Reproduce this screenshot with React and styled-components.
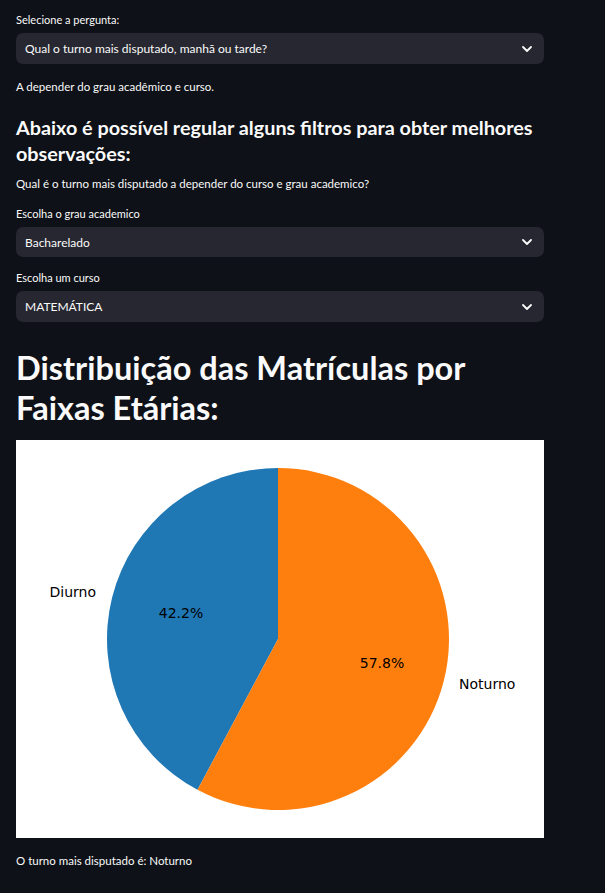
import React from 'react';
import styled, { createGlobalStyle } from 'styled-components';

const GlobalStyle = createGlobalStyle`
  html, body {
    margin: 0;
    padding: 0;
    background: #0e1117;
  }
  body {
    font-family: Lato, "Open Sans", sans-serif;
    color: #fafafa;
  }
`;

const Page = styled.div`
  width: 528px;
  padding: 0 16px;
  display: flex;
  flex-direction: column;
`;

const Label = styled.div`
  font-size: 11px;
  line-height: 14px;
  margin-top: ${props => props.top || 0}px;
  margin-bottom: 6px;
`;

const Select = styled.div`
  height: ${props => props.height || 31}px;
  background: #262730;
  border-radius: 7px;
  display: flex;
  align-items: center;
  justify-content: space-between;
  padding: 0 12px 0 9px;
  font-size: 12px;
`;

const Text = styled.p`
  margin: ${props => props.top || 0}px 0 0;
  font-size: 11.5px;
  line-height: 18px;
`;

const SubHeading = styled.h3`
  margin: ${props => props.top || 0}px 0 0;
  font-size: 19.8px;
  font-weight: 700;
  line-height: 26px;
`;

const Heading = styled.h2`
  margin: ${props => props.top || 0}px 0 0;
  font-size: 32.5px;
  font-weight: 700;
  line-height: 40px;
`;

const ChartFrame = styled.div`
  margin-top: ${props => props.top || 0}px;
  height: 398px;
  background: #ffffff;
`;

const Chevron = () => (
  <svg width="10" height="6" viewBox="0 0 10 6">
    <path d="M1 1 L5 5 L9 1" fill="none" stroke="#fafafa" strokeWidth="1.8" strokeLinecap="round" strokeLinejoin="round" />
  </svg>
);

const Dropdown = ({ value, height }) => (
  <Select height={height}>
    <span>{value}</span>
    <Chevron />
  </Select>
);

const slices = [
  { label: 'Diurno', value: 42.2, color: '#1f77b4' },
  { label: 'Noturno', value: 57.8, color: '#ff7f0e' },
];

const PieChart = () => {
  const cx = 262;
  const cy = 199;
  const r = 171;
  const split = ((90 + slices[0].value * 3.6) * Math.PI) / 180;
  const ex = cx + r * Math.cos(split);
  const ey = cy - r * Math.sin(split);
  return (
    <svg width="528" height="398" viewBox="0 0 528 398">
      <path d={`M${cx} ${cy} L${cx} ${cy - r} A${r} ${r} 0 0 0 ${ex} ${ey} Z`} fill={slices[0].color} />
      <path d={`M${cx} ${cy} L${cx} ${cy - r} A${r} ${r} 0 1 1 ${ex} ${ey} Z`} fill={slices[1].color} />
      <g fontFamily='"DejaVu Sans", sans-serif' fontSize="14" fill="#000">
        <text x="80" y="157" textAnchor="end">Diurno</text>
        <text x="165" y="178" textAnchor="middle">42.2%</text>
        <text x="366" y="228" textAnchor="middle">57.8%</text>
        <text x="443" y="249" textAnchor="start">Noturno</text>
      </g>
    </svg>
  );
};

export default function App() {
  return (
    <>
      <GlobalStyle />
      <Page>
        <Label top={13}>Selecione a pergunta:</Label>
        <Dropdown value="Qual o turno mais disputado, manhã ou tarde?" />
        <Text top={14}>A depender do grau acadêmico e curso.</Text>
        <SubHeading top={18}>
          Abaixo é possível regular alguns filtros para obter melhores observações:
        </SubHeading>
        <Text top={9}>Qual é o turno mais disputado a depender do curso e grau academico?</Text>
        <Label top={14}>Escolha o grau academico</Label>
        <Dropdown value="Bacharelado" height={30} />
        <Label top={14}>Escolha um curso</Label>
        <Dropdown value="MATEMÁTICA" />
        <Heading top={26}>
          Distribuição das Matrículas por Faixas Etárias:
        </Heading>
        <ChartFrame top={12}>
          <PieChart />
        </ChartFrame>
        <Text top={14}>O turno mais disputado é: Noturno</Text>
      </Page>
    </>
  );
}
